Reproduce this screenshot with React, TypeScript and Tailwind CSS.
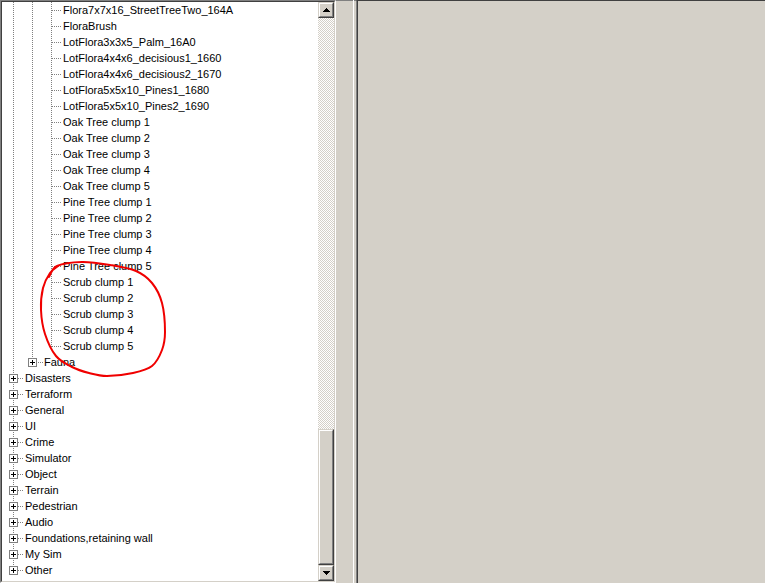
import React from "react";

type Kind = "leaf" | "l1" | "l0";
interface RowData {
  label: string;
  kind: Kind;
  last?: boolean;
}

const leafLabels = [
  "Flora7x7x16_StreetTreeTwo_164A",
  "FloraBrush",
  "LotFlora3x3x5_Palm_16A0",
  "LotFlora4x4x6_decisious1_1660",
  "LotFlora4x4x6_decisious2_1670",
  "LotFlora5x5x10_Pines1_1680",
  "LotFlora5x5x10_Pines2_1690",
  "Oak Tree clump 1",
  "Oak Tree clump 2",
  "Oak Tree clump 3",
  "Oak Tree clump 4",
  "Oak Tree clump 5",
  "Pine Tree clump 1",
  "Pine Tree clump 2",
  "Pine Tree clump 3",
  "Pine Tree clump 4",
  "Pine Tree clump 5",
  "Scrub clump 1",
  "Scrub clump 2",
  "Scrub clump 3",
  "Scrub clump 4",
  "Scrub clump 5",
];

const topLabels = [
  "Disasters",
  "Terraform",
  "General",
  "UI",
  "Crime",
  "Simulator",
  "Object",
  "Terrain",
  "Pedestrian",
  "Audio",
  "Foundations,retaining wall",
  "My Sim",
  "Other",
];

const rows: RowData[] = [
  ...leafLabels.map((l, i) => ({ label: l, kind: "leaf" as Kind, last: i === leafLabels.length - 1 })),
  { label: "Fauna", kind: "l1", last: true },
  ...topLabels.map((l, i) => ({ label: l, kind: "l0" as Kind, last: i === topLabels.length - 1 })),
];

const DOT = "#808080";

function VLine({ x, y1, y2 }: { x: number; y1: number; y2: number }) {
  return <line x1={x + 0.5} x2={x + 0.5} y1={y1} y2={y2} stroke={DOT} strokeWidth={1} strokeDasharray="1 1" />;
}

function HLine({ x1, x2 }: { x1: number; x2: number }) {
  return <line x1={x1} x2={x2} y1={8.5} y2={8.5} stroke={DOT} strokeWidth={1} strokeDasharray="1 1" />;
}

function PlusBox({ x }: { x: number }) {
  return (
    <g>
      <rect x={x + 0.5} y={4.5} width={8} height={8} fill="#ffffff" stroke={DOT} strokeWidth={1} />
      <line x1={x + 2} x2={x + 7} y1={8.5} y2={8.5} stroke="#000" strokeWidth={1} />
      <line x1={x + 4.5} x2={x + 4.5} y1={6} y2={11} stroke="#000" strokeWidth={1} />
    </g>
  );
}

function Connector({ row }: { row: RowData }) {
  if (row.kind === "leaf") {
    return (
      <svg width={61} height={16} shapeRendering="crispEdges" className="shrink-0 block">
        <VLine x={11} y1={0} y2={16} />
        <VLine x={30} y1={0} y2={16} />
        <VLine x={49} y1={0} y2={row.last ? 9 : 16} />
        <HLine x1={50} x2={59} />
      </svg>
    );
  }
  if (row.kind === "l1") {
    return (
      <svg width={42} height={16} shapeRendering="crispEdges" className="shrink-0 block">
        <VLine x={11} y1={0} y2={16} />
        <VLine x={30} y1={0} y2={4} />
        <PlusBox x={26} />
        <HLine x1={36} x2={41} />
      </svg>
    );
  }
  return (
    <svg width={23} height={16} shapeRendering="crispEdges" className="shrink-0 block">
      <VLine x={11} y1={0} y2={4} />
      {!row.last && <VLine x={11} y1={14} y2={16} />}
      <PlusBox x={7} />
      <HLine x1={16} x2={21} />
    </svg>
  );
}

function smoothPath(pts: [number, number][]) {
  let d = `M ${pts[0][0]} ${pts[0][1]}`;
  for (let i = 0; i < pts.length - 1; i++) {
    const p0 = pts[i - 1] || pts[i];
    const p1 = pts[i];
    const p2 = pts[i + 1];
    const p3 = pts[i + 2] || p2;
    const c1x = p1[0] + (p2[0] - p0[0]) / 6;
    const c1y = p1[1] + (p2[1] - p0[1]) / 6;
    const c2x = p2[0] - (p3[0] - p1[0]) / 6;
    const c2y = p2[1] - (p3[1] - p1[1]) / 6;
    d += ` C ${c1x} ${c1y} ${c2x} ${c2y} ${p2[0]} ${p2[1]}`;
  }
  return d;
}

const loop: [number, number][] = [
  [49, 277],
  [57, 266],
  [82, 262],
  [110, 265],
  [136, 271],
  [152, 283],
  [162, 303],
  [165, 332],
  [162, 350],
  [152, 366],
  [133, 373],
  [107, 376],
  [89, 373],
  [72, 367],
  [56, 356],
  [45, 334],
  [41, 310],
  [43, 288],
  [50, 273],
  [58, 266],
];

function Raised({ className, children }: { className?: string; children?: React.ReactNode }) {
  return (
    <div className={`border border-t-[#d4d0c8] border-l-[#d4d0c8] border-b-[#404040] border-r-[#404040] bg-[#d4d0c8] ${className ?? ""}`}>
      <div className="h-full w-full border border-t-white border-l-white border-b-[#808080] border-r-[#808080] flex items-center justify-center">
        {children}
      </div>
    </div>
  );
}

function Scrollbar() {
  return (
    <div className="flex w-[16px] shrink-0 flex-col">
      <Raised className="h-[16px] shrink-0">
        <svg width={7} height={4} className="block" shapeRendering="crispEdges">
          <polygon points="3.5,0 7,4 0,4" fill="#000" />
        </svg>
      </Raised>
      <div className="flex-1 bg-[conic-gradient(#ffffff_25%,#d4d0c8_0_50%,#ffffff_0_75%,#d4d0c8_0)] bg-[length:2px_2px]" />
      <Raised className="h-[136px] shrink-0" />
      <Raised className="h-[16px] shrink-0">
        <svg width={7} height={4} className="block" shapeRendering="crispEdges">
          <polygon points="0,0 7,0 3.5,4" fill="#000" />
        </svg>
      </Raised>
    </div>
  );
}

export default function App() {
  return (
    <div className="flex h-[583px] w-[765px] overflow-hidden bg-[#d4d0c8] font-['Liberation_Sans',Arial,sans-serif]">
      {/* Tree view with sunken edge */}
      <div className="relative h-full w-[336px] shrink-0 border border-t-[#808080] border-l-[#808080] border-b-white border-r-white">
        <div className="flex h-full w-full border border-t-[#404040] border-l-[#404040] border-b-[#d4d0c8] border-r-[#d4d0c8]">
          <div className="flex-1 overflow-hidden bg-white">
            {rows.map((r, i) => (
              <div key={i} className="flex h-[16px] items-center">
                <Connector row={r} />
                <span className="whitespace-nowrap text-[11px] leading-[16px] text-black">{r.label}</span>
              </div>
            ))}
          </div>
          <Scrollbar />
        </div>
        <svg className="pointer-events-none absolute -left-px -top-px" width={336} height={583}>
          <path d={smoothPath(loop)} fill="none" stroke="#f00000" strokeWidth={2} strokeLinecap="round" strokeLinejoin="round" />
        </svg>
      </div>
      {/* Splitter */}
      <div className="flex h-full w-[20px] shrink-0">
        <div className="h-full w-[17px] border-t border-t-[#808080]" />
        <div className="h-full w-px bg-white" />
        <div className="h-full w-[2px] border-t border-t-[#808080]" />
      </div>
      {/* Right panel */}
      <div className="h-full flex-1 border-l border-t border-l-[#808080] border-t-[#404040]">
        <div className="h-full w-full border-l border-l-[#404040] bg-[#d4d0c8]" />
      </div>
    </div>
  );
}
